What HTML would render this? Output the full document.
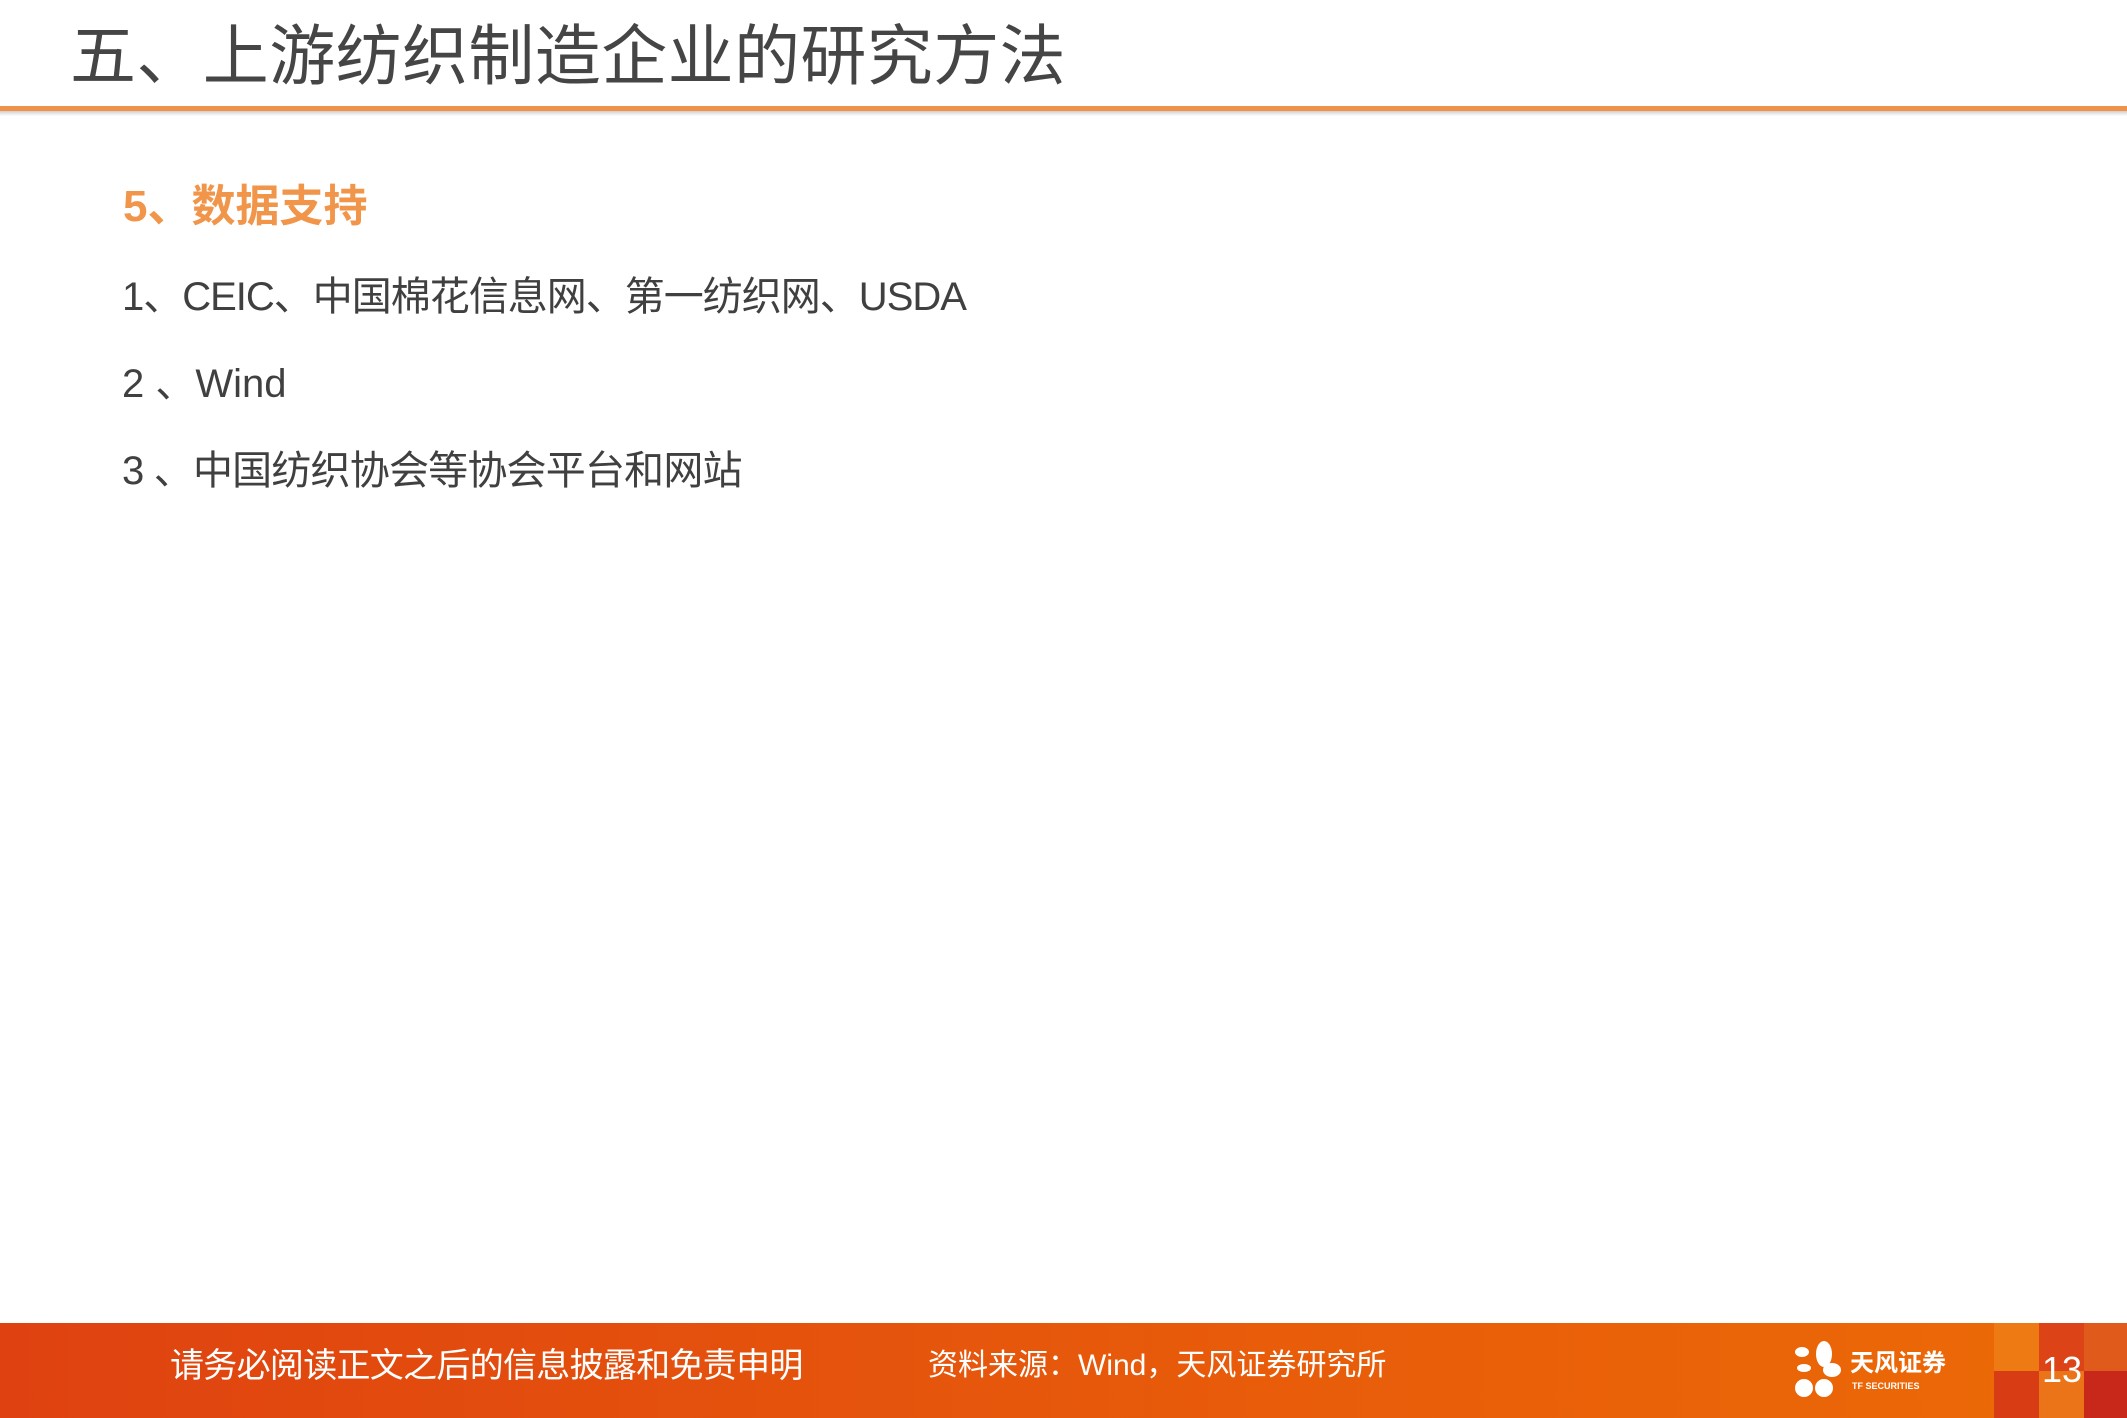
<!DOCTYPE html>
<html><head><meta charset="utf-8"><style>
body{margin:0;width:2127px;height:1418px;position:relative;background:#fff;overflow:hidden;font-family:"Liberation Sans","Noto Sans CJK SC",sans-serif;}
.t{position:absolute;white-space:nowrap;}
</style></head><body>
<div class="t" style="left:70px;top:16px;font-size:66px;color:#454545;line-height:80px;letter-spacing:0.4px;">五、上游纺织制造企业的研究方法</div>
<div style="position:absolute;left:0;top:106px;width:2127px;height:5px;background:#f0924a;"></div>
<div style="position:absolute;left:0;top:111px;width:2127px;height:5px;background:linear-gradient(#cfcfcf,#fff);"></div>
<div class="t" style="left:123px;top:181px;font-size:44px;font-weight:bold;color:#f0954a;line-height:52px;">5、数据支持</div>
<div class="t" style="left:122px;top:273px;font-size:40px;color:#404040;line-height:48px;letter-spacing:-1px;">1、CEIC、中国棉花信息网、第一纺织网、USDA</div>
<div class="t" style="left:122px;top:360px;font-size:40px;color:#404040;line-height:48px;">2 、Wind</div>
<div class="t" style="left:122px;top:447px;font-size:40px;color:#404040;line-height:48px;letter-spacing:-0.8px;">3 、中国纺织协会等协会平台和网站</div>
<div style="position:absolute;left:0;top:1323px;width:2127px;height:95px;background:linear-gradient(90deg,#df4210,#e85c0a 60%,#ec6a06);"></div>
<div style="position:absolute;left:1994px;top:1323px;width:45px;height:48px;background:#ee7a14;"></div>
<div style="position:absolute;left:2039px;top:1323px;width:45px;height:48px;background:#dc4418;"></div>
<div style="position:absolute;left:2084px;top:1323px;width:43px;height:48px;background:#e05a1c;"></div>
<div style="position:absolute;left:1994px;top:1371px;width:45px;height:47px;background:#d83c14;"></div>
<div style="position:absolute;left:2039px;top:1371px;width:45px;height:47px;background:#eb7418;"></div>
<div style="position:absolute;left:2084px;top:1371px;width:43px;height:47px;background:#c8281a;"></div>
<div class="t" style="left:170px;top:1344px;font-size:34px;color:#fff;line-height:44px;letter-spacing:-0.7px;">请务必阅读正文之后的信息披露和免责申明</div>
<div class="t" style="left:928px;top:1346px;font-size:30px;color:#fff;line-height:40px;">资料来源：Wind，天风证券研究所</div>
<svg style="position:absolute;left:1792px;top:1340px" width="50" height="62" viewBox="0 0 50 62">
<g fill="#fff"><ellipse cx="32" cy="14" rx="8" ry="13"/><ellipse cx="10" cy="12" rx="7" ry="5"/><ellipse cx="12" cy="28" rx="7" ry="4"/><ellipse cx="40" cy="30" rx="9" ry="7"/><ellipse cx="12" cy="48" rx="9" ry="9"/><ellipse cx="32" cy="48" rx="9" ry="9"/></g></svg>
<div class="t" style="left:1850px;top:1350px;font-size:24px;font-weight:bold;color:#fff;line-height:28px;">天风证券</div>
<div class="t" style="left:1852px;top:1381px;font-size:9px;font-weight:bold;color:#fff;line-height:10px;">TF SECURITIES</div>
<div class="t" style="left:2042px;top:1348px;font-size:36px;color:#fff;line-height:44px;">13</div>
</body></html>
